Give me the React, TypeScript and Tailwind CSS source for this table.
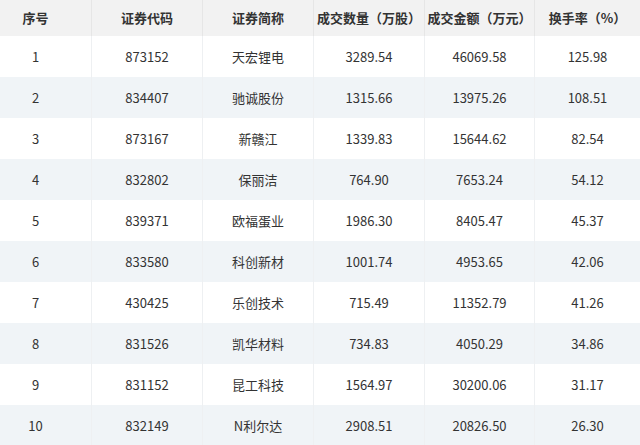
const headers = ['序号', '证券代码', '证券简称', '成交数量（万股）', '成交金额（万元）', '换手率（%）']

const rows = [
  ['1', '873152', '天宏锂电', '3289.54', '46069.58', '125.98'],
  ['2', '834407', '驰诚股份', '1315.66', '13975.26', '108.51'],
  ['3', '873167', '新赣江', '1339.83', '15644.62', '82.54'],
  ['4', '832802', '保丽洁', '764.90', '7653.24', '54.12'],
  ['5', '839371', '欧福蛋业', '1986.30', '8405.47', '45.37'],
  ['6', '833580', '科创新材', '1001.74', '4953.65', '42.06'],
  ['7', '430425', '乐创技术', '715.49', '11352.79', '41.26'],
  ['8', '831526', '凯华材料', '734.83', '4050.29', '34.86'],
  ['9', '831152', '昆工科技', '1564.97', '30200.06', '31.17'],
  ['10', '832149', 'N利尔达', '2908.51', '20826.50', '26.30'],
]

// column widths: first column text is offset left
const cols = ['w-[92px] pr-[20px]', 'w-[111px]', 'w-[111px]', 'w-[111px]', 'w-[110px]', 'w-[105px]']

export default function App() {
  return (
    <div
      className="w-[640px] h-[445px] overflow-hidden bg-white text-[13px] text-[#333]"
      style={{ fontFamily: '"Microsoft YaHei", "Noto Sans CJK SC", sans-serif' }}
    >
      {/* Header */}
      <div className="flex h-[36px] bg-[#f2f2f2]">
        {headers.map((h, i) => (
          <div
            key={h}
            className={`${cols[i]} shrink-0 flex items-center justify-center font-bold border-r border-[#e6e6e6] last:border-r-0`}
          >
            {h}
          </div>
        ))}
      </div>

      {/* Body */}
      {rows.map((r, ri) => (
        <div
          key={r[0]}
          className={`flex h-[41px] ${ri % 2 === 1 ? 'bg-[#f0f4f7]' : 'bg-white'}`}
        >
          {r.map((c, ci) => (
            <div
              key={ci}
              className={`${cols[ci]} shrink-0 flex items-center justify-center border-r border-[#eef0f2] last:border-r-0`}
            >
              {c}
            </div>
          ))}
        </div>
      ))}
    </div>
  )
}
